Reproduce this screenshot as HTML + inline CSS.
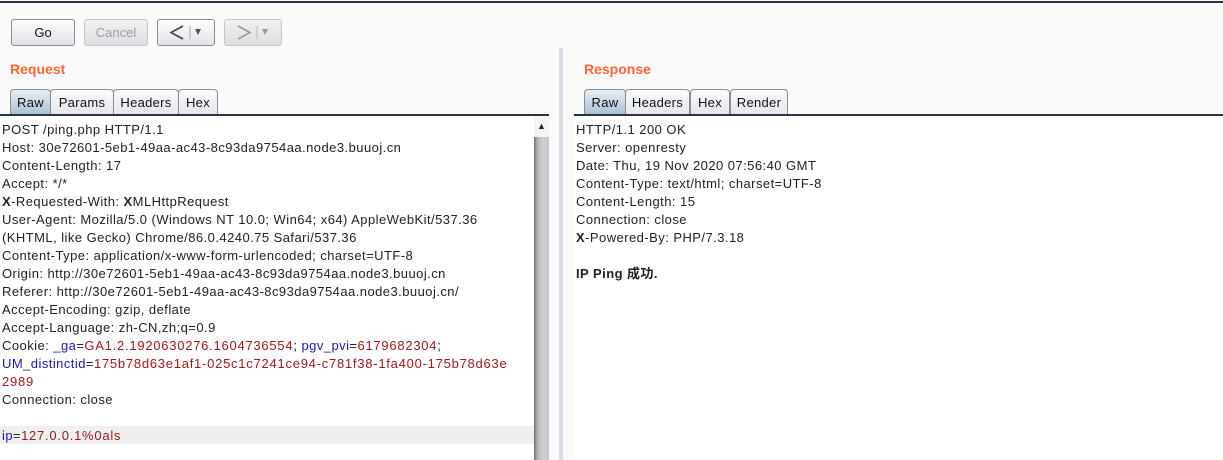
<!DOCTYPE html>
<html><head><meta charset="utf-8"><style>
*{margin:0;padding:0;box-sizing:border-box}
body{width:1223px;height:460px;overflow:hidden;background:#fafafa;font-family:"Liberation Sans","Noto Sans CJK SC",sans-serif;font-size:13px;color:#222;position:relative}
.top{position:absolute;left:0;top:1px;width:1223px;height:2px;background:#2b3442}
.btn{position:absolute;top:19px;height:27px;border:1px solid #8a8d92;border-radius:3px;background:linear-gradient(#fdfdfd,#dfe2e6);text-align:center;line-height:25px;font-size:13px;color:#111}
.dis{border-color:#c4c6c9;color:#9a9da1;background:linear-gradient(#f0f1f2,#dcdee1)}
.title{position:absolute;top:61px;color:#ff6633;font-weight:bold;font-size:14px}
.tab{position:absolute;top:89px;height:26px;border:1px solid #8a8d92;border-bottom:none;border-radius:4px 4px 0 0;background:linear-gradient(#fbfbfc,#e4e6ea);line-height:25px;text-align:center;font-size:13px;color:#111;letter-spacing:0.3px}
.tab.sel{background:linear-gradient(#e8eef4,#a9bfd3)}
.line{position:absolute;top:114px;height:2px;background:#2b3442}
.txt{position:absolute;top:121px;line-height:18px;white-space:pre;font-size:13px;color:#222;letter-spacing:0.45px}
.b{color:#1a1ab0}.r{color:#a01818;letter-spacing:0.75px}
</style></head><body>
<div class="top"></div>
<div class="btn" style="left:11px;width:64px">Go</div>
<div class="btn dis" style="left:84px;width:64px">Cancel</div>
<div class="btn" style="left:157px;width:58px"><svg width="56" height="25" viewBox="0 0 56 25"><path d="M25 6 L13 12.5 L25 19" fill="none" stroke="#444" stroke-width="1.6"/><line x1="32" y1="6" x2="32" y2="19" stroke="#aaa"/><path d="M37 9 L43 9 L40 15 Z" fill="#555"/></svg></div>
<div class="btn dis" style="left:224px;width:58px"><svg width="56" height="25" viewBox="0 0 56 25"><path d="M13 6 L25 12.5 L13 19" fill="none" stroke="#999" stroke-width="1.6"/><line x1="32" y1="6" x2="32" y2="19" stroke="#bbb"/><path d="M37 9 L43 9 L40 15 Z" fill="#999"/></svg></div>

<div class="title" style="left:10px">Request</div>
<div class="tab sel" style="left:10px;width:41px">Raw</div>
<div class="tab" style="left:50px;width:64px">Params</div>
<div class="tab" style="left:113px;width:66px">Headers</div>
<div class="tab" style="left:178px;width:40px">Hex</div>
<div class="line" style="left:0;width:549px"></div>
<div style="position:absolute;left:0;top:116px;width:534px;height:344px;background:#fff"></div>
<div style="position:absolute;left:0;top:426px;width:534px;height:18px;background:#efefef"></div>
<div style="position:absolute;left:534px;top:116px;width:15px;height:344px;background:#f4f4f4"></div>
<div style="position:absolute;left:534px;top:137px;width:15px;height:323px;background:linear-gradient(90deg,#707070,#b8b8bc 25%,#cfd0d4 60%,#c4c6cc)"></div>
<div style="position:absolute;left:537px;top:121px;font-size:9px;color:#222">▲</div>
<div class="txt" style="left:2px">POST /ping.php HTTP/1.1
Host: 30e72601-5eb1-49aa-ac43-8c93da9754aa.node3.buuoj.cn
Content-Length: 17
Accept: */*
<b>X</b>-Requested-With: <b>X</b>MLHttpRequest
User-Agent: Mozilla/5.0 (Windows NT 10.0; Win64; x64) AppleWebKit/537.36
(KHTML, like Gecko) Chrome/86.0.4240.75 Safari/537.36
Content-Type: application/x-www-form-urlencoded; charset=UTF-8
Origin: http://30e72601-5eb1-49aa-ac43-8c93da9754aa.node3.buuoj.cn
Referer: http://30e72601-5eb1-49aa-ac43-8c93da9754aa.node3.buuoj.cn/
Accept-Encoding: gzip, deflate
Accept-Language: zh-CN,zh;q=0.9
Cookie: <span class="b">_ga</span>=<span class="r">GA1.2.1920630276.1604736554</span>; <span class="b">pgv_pvi</span>=<span class="r">6179682304</span>;
<span class="b">UM_distinctid</span>=<span class="r">175b78d63e1af1-025c1c7241ce94-c781f38-1fa400-175b78d63e</span>
<span class="r">2989</span>
Connection: close

<span class="b">ip</span>=<span class="r">127.0.0.1%0als</span></div>

<div style="position:absolute;left:559px;top:48px;width:4px;height:412px;background:#dcdde4"></div>

<div class="title" style="left:584px">Response</div>
<div class="tab sel" style="left:584px;width:42px">Raw</div>
<div class="tab" style="left:625px;width:65px">Headers</div>
<div class="tab" style="left:690px;width:40px">Hex</div>
<div class="tab" style="left:730px;width:58px">Render</div>
<div class="line" style="left:574px;width:649px"></div>
<div style="position:absolute;left:574px;top:116px;width:649px;height:344px;background:#fff"></div>
<div class="txt" style="left:576px">HTTP/1.1 200 OK
Server: openresty
Date: Thu, 19 Nov 2020 07:56:40 GMT
Content-Type: text/html; charset=UTF-8
Content-Length: 15
Connection: close
<b>X</b>-Powered-By: PHP/7.3.18

<b>IP Ping 成功.</b></div>
</body></html>
